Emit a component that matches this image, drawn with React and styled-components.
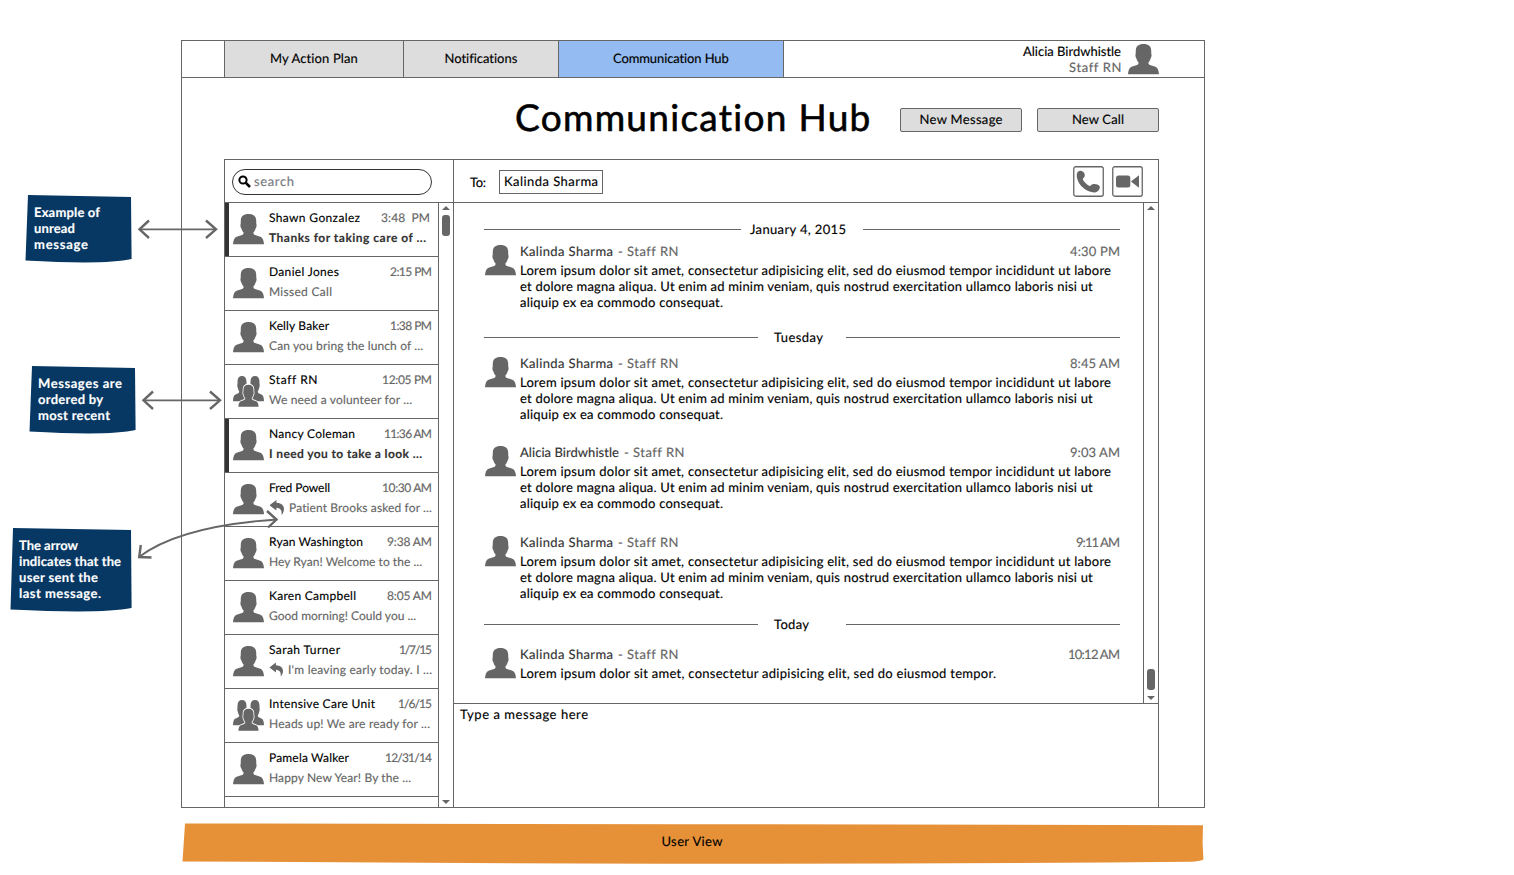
import React, { useLayoutEffect, useRef } from "react";
import styled, { createGlobalStyle, css } from "styled-components";

const LINE = "#666";

const Global = createGlobalStyle`
  *, *::before, *::after { box-sizing: border-box; }
  body {
    margin: 0;
    background: #fff;
    color: #000;
    font: 13px/16px Lato, "Open Sans", sans-serif;
    text-rendering: geometricPrecision;
    -webkit-text-stroke: 0.15px;
  }
`;

const Canvas = styled.div`
  position: relative;
  width: 1514px;
  height: 875px;
  padding: 40px 0 0 181px;
  overflow: hidden;
`;

const TextRun = styled.span`
  display: block;
  flex: none;
  white-space: pre;
  color: ${(p) => p.$color || "inherit"};
`;

/* Tracks a run of text out to a set measure. */
function Text({ w, color, children }) {
  const ref = useRef(null);
  useLayoutEffect(() => {
    const el = ref.current;
    el.style.width = "max-content";
    el.style.letterSpacing = "0px";
    const natural = el.getBoundingClientRect().width;
    el.style.letterSpacing = `${(w - natural) / (children.length - 1)}px`;
    el.style.width = `${w}px`;
  }, [w, children]);
  return <TextRun ref={ref} $color={color}>{children}</TextRun>;
}

const Frame = styled.div`
  display: flex;
  flex-direction: column;
  width: 1024px;
  height: 768px;
  border: 1px solid ${LINE};
`;

const TopBar = styled.nav`
  display: flex;
  height: 37px;
  padding-left: 42px;
  border-bottom: 1px solid ${LINE};
`;

const Tab = styled.div`
  display: flex;
  justify-content: center;
  width: ${(p) => p.$width}px;
  padding-top: 9px;
  border-right: 1px solid ${LINE};
  background: ${(p) => (p.$active ? "#94bbf2" : "#ddd")};
  &:first-child { border-left: 1px solid ${LINE}; }
`;

const User = styled.div`
  display: flex;
  gap: 7px;
  margin-left: auto;
  padding: 2px 45px 0 0;
  svg { margin-top: 1px; }
`;

const UserText = styled.div`
  display: flex;
  flex-direction: column;
  align-items: flex-end;
`;

const TitleRow = styled.header`
  display: flex;
  height: 81px;
  padding: 15px 0 0 333px;
`;

const Title = styled.h1`
  flex: none;
  margin: 0;
  width: 385px;
  font-size: 37px;
  line-height: 48px;
  font-weight: 400;
  -webkit-text-stroke: 0.6px;
`;

const Button = styled.div`
  display: flex;
  flex: none;
  justify-content: center;
  width: 122px;
  height: 24px;
  margin: 15px 15px 0 0;
  padding-top: 2px;
  border: 1px solid ${LINE};
  border-radius: 2px;
  background: #ddd;
`;

const Hub = styled.main`
  display: flex;
  flex: 1;
  min-height: 0;
  width: 935px;
  margin-left: 42px;
  border: 1px solid ${LINE};
  border-bottom: 0;
`;

const Sidebar = styled.aside`
  display: flex;
  flex-direction: column;
  width: 229px;
  border-right: 1px solid ${LINE};
`;

const SearchBar = styled.div`
  flex: none;
  height: 43px;
  padding: 9px 7px;
  border-bottom: 1px solid ${LINE};
`;

const SearchField = styled.div`
  display: flex;
  gap: 3px;
  width: 200px;
  height: 26px;
  padding: 3px 0 0 5px;
  border: 1px solid #333;
  border-radius: 13px;
  svg { margin-top: 1px; }
`;

const Scroller = styled.div`
  display: flex;
  flex: 1;
  min-height: 0;
`;

const Conversations = styled.div`
  width: 214px;
  overflow: hidden;
  border-right: 1px solid ${LINE};
`;

const Row = styled.div`
  display: flex;
  height: 54px;
  padding: 7px 0 0 8px;
  border-bottom: 1px solid ${LINE};
  font-size: 12px;
  ${(p) => p.$unread && css`box-shadow: inset 4px 0 #333;`}
  > svg { flex: none; margin-top: 4px; }
`;

const RowBody = styled.div`
  width: 163px;
  margin-left: 5px;
`;

const RowHead = styled.div`
  display: flex;
  justify-content: space-between;
  height: 20px;
  padding-right: ${(p) => p.$inset || 0}px;
`;

const Preview = styled.div`
  display: flex;
  gap: 5px;
  color: ${LINE};
  ${(p) => p.$unread && css`
    color: #333;
    font-weight: 700;
  `}
`;

const Track = styled.div`
  display: flex;
  flex-direction: column;
  align-items: center;
  width: 14px;
  padding: 3px 0;
`;

const Arrow = styled.i`
  border: solid transparent;
  border-width: 0 4px;
  ${(p) => (p.$down ? css`border-top: 4px solid ${LINE};` : css`border-bottom: 4px solid ${LINE};`)}
`;

const Thumb = styled.i`
  width: 8px;
  height: 21px;
  border-radius: 3px;
  background: ${LINE};
  margin: ${(p) => (p.$end ? "auto 0 6px" : "5px 0 auto")};
`;

const Thread = styled.section`
  display: flex;
  flex-direction: column;
  width: 704px;
`;

const Recipient = styled.div`
  display: flex;
  flex: none;
  height: 43px;
  padding: 6px 15px 0 16px;
  border-bottom: 1px solid ${LINE};
`;

const ToLabel = styled.div`
  width: 29px;
  padding-top: 8px;
`;

const ToField = styled.div`
  width: 104px;
  height: 24px;
  margin: 4px auto 0 0;
  padding: 2px 0 0 4px;
  border: 1px solid ${LINE};
`;

const CallIcons = styled.div`
  display: flex;
  gap: 8px;
`;

const Messages = styled.div`
  display: flex;
  height: 501px;
  border-bottom: 1px solid ${LINE};
`;

const MessageList = styled.div`
  width: 690px;
  padding: 18px 0 0 30px;
  border-right: 1px solid ${LINE};
`;

const Divider = styled.div`
  display: flex;
  width: 636px;
  height: 16px;
  align-items: center;
  &::before, &::after {
    content: "";
    width: ${(p) => p.$rule}px;
    height: 1px;
    background: ${LINE};
  }
  &::before { margin-right: ${(p) => p.$gap}px; }
  &::after { margin-left: auto; }
`;

const Message = styled.article`
  display: flex;
  width: 636px;
  height: ${(p) => p.$height}px;
  padding: ${(p) => p.$top}px 0 0 1px;
  svg { flex: none; margin-top: 2px; }
`;

const MessageBody = styled.div`
  flex: 1;
  margin-left: 4px;
`;

const MessageHead = styled.div`
  display: flex;
  gap: 5px;
  height: 19px;
  color: #333;
`;

const Time = styled.div`
  margin-left: auto;
  color: ${LINE};
`;

const Composer = styled.div`
  padding: 2px 6px;
`;

const Banner = styled.footer`
  display: flex;
  justify-content: center;
  position: relative;
  width: 1022px;
  height: 41px;
  margin-top: 15px;
  padding-top: 10px;
  svg { position: absolute; left: 0; top: 0; }
  span { position: relative; }
`;

const Note = styled.div`
  position: absolute;
  left: ${(p) => p.$x}px;
  top: ${(p) => p.$y}px;
  padding: 9px 0 0 9px;
  color: #fff;
  font-weight: 700;
  svg { position: absolute; left: 0; top: 0; }
  span { position: relative; }
`;

const Connectors = styled.svg`
  position: absolute;
  left: 0;
  top: 180px;
  pointer-events: none;
`;

const PERSON =
  "M15.5 0C10.4 0 7.9 2.4 7.8 6.4L7.7 10C7.1 10.6 7.5 13.4 8.3 14.2C8.8 16.2 9.7 17.4 10.6 18.4C10.7 20 9.8 20.7 8.2 21.2L3.6 22.7C1.2 23.6 .2 26.4 0 30.3H31C30.8 26.4 29.8 23.6 27.4 22.7L22.8 21.2C21.2 20.7 20.3 20 20.4 18.4C21.3 17.4 22.2 16.2 22.7 14.2C23.5 13.4 23.9 10.6 23.3 10L23.2 6.4C23.1 2.4 20.6 0 15.5 0Z";

function Person() {
  return (
    <svg width="31" height="31" viewBox="0 0 31 31" fill={LINE}>
      <path d={PERSON} />
    </svg>
  );
}

function Group() {
  return (
    <svg width="31" height="31" viewBox="0 0 31 31" fill={LINE}>
      <path d={PERSON} transform="scale(.58 .83)" />
      <path d={PERSON} transform="translate(13 0) scale(.58 .83)" />
      <path
        d={PERSON}
        transform="translate(5.4 8.7) scale(.65 .73)"
        stroke="#fff"
        strokeWidth="2.4"
        paintOrder="stroke"
      />
    </svg>
  );
}

function Reply() {
  return (
    <svg width="15" height="16" viewBox="0 0 15 16" fill={LINE}>
      <path d="M0.500 5.3L7.400 0V2.8C12.600 3 15.100 5.8 15 9C14.9 11.6 13.900 13.8 12.400 15C13.200 11.200 12 8 7.400 7.800V10.600Z" />
    </svg>
  );
}

function SearchIcon() {
  return (
    <svg width="13" height="14" viewBox="0 0 13 14" fill="none" stroke="#000" strokeWidth="2">
      <circle cx="5" cy="6" r="3.6" />
      <path d="M7.6 8.6L12 13" strokeWidth="2.6" />
    </svg>
  );
}

function Phone() {
  return (
    <svg width="31" height="31" viewBox="0 0 31 31">
      <rect x=".75" y=".75" width="29.5" height="29.5" rx="2" fill="#fff" stroke={LINE} strokeWidth="1.3" />
      <path
        fill={LINE}
        d="M4 7.5C4.5 5.4 6.300 4.400 8.500 4.900C11 5.500 12.200 7.800 11.700 10.200C11.300 11.600 10 12 9.700 13.200C10.900 15.800 13.700 18.600 16.500 19.900C17.700 20 18.300 18.600 19.700 18.300C22.200 17.700 25 18.300 26.700 20.200C27.400 23 25 26.100 21.800 26.500C18 26.700 12.800 24.500 9 20.800C5.200 17 3.100 11.600 4 7.500Z"
      />
    </svg>
  );
}

function Video() {
  return (
    <svg width="31" height="31" viewBox="0 0 31 31" fill={LINE}>
      <rect x=".75" y=".75" width="29.5" height="29.5" rx="2" fill="#fff" stroke={LINE} strokeWidth="1.3" />
      <rect x="4" y="9.5" width="14.3" height="12" rx="2.5" />
      <path d="M18.9 15.5L27 9.200V21.700Z" />
    </svg>
  );
}

const conversations = [
  { name: "Shawn Gonzalez", w: 91, time: "3:48  PM", tw: 49, inset: 2, text: "Thanks for taking care of ...", pw: 157, unread: true },
  { name: "Daniel Jones", w: 70, time: "2:15 PM", tw: 42, text: "Missed Call", pw: 63 },
  { name: "Kelly Baker", w: 60, time: "1:38 PM", tw: 42, text: "Can you bring the lunch of ...", pw: 154 },
  { name: "Staff RN", w: 48, time: "12:05 PM", tw: 50, text: "We need a volunteer for ...", pw: 143, group: true },
  { name: "Nancy Coleman", w: 86, time: "11:36 AM", tw: 48, text: "I need you to take a look ...", pw: 153, unread: true },
  { name: "Fred Powell", w: 61, time: "10:30 AM", tw: 50, text: "Patient Brooks asked for ...", pw: 143, reply: true },
  { name: "Ryan Washington", w: 94, time: "9:38 AM", tw: 45, text: "Hey Ryan! Welcome to the ...", pw: 153 },
  { name: "Karen Campbell", w: 87, time: "8:05 AM", tw: 45, text: "Good morning! Could you ...", pw: 147 },
  { name: "Sarah Turner", w: 71, time: "1/7/15", tw: 33, text: "I'm leaving early today. I ...", pw: 144, reply: true },
  { name: "Intensive Care Unit", w: 106, time: "1/6/15", tw: 34, text: "Heads up! We are ready for ...", pw: 161, group: true },
  { name: "Pamela Walker", w: 80, time: "12/31/14", tw: 47, text: "Happy New Year! By the ...", pw: 142 },
];

const lorem = [
  ["Lorem ipsum dolor sit amet, consectetur adipisicing elit, sed do eiusmod tempor incididunt ut labore", 591],
  ["et dolore magna aliqua. Ut enim ad minim veniam, quis nostrud exercitation ullamco laboris nisi ut", 573],
  ["aliquip ex ea commodo consequat.", 203],
];
const shortLorem = [["Lorem ipsum dolor sit amet, consectetur adipisicing elit, sed do eiusmod tempor.", 476]];

function Post({ name = "Kalinda Sharma", w = 93, time, tw, height, top = 0, lines = lorem }) {
  return (
    <Message $height={height} $top={top}>
      <Person />
      <MessageBody>
        <MessageHead>
          <Text w={w}>{name}</Text>
          <Text w={60} color={LINE}>- Staff RN</Text>
          <Time><Text w={tw}>{time}</Text></Time>
        </MessageHead>
        {lines.map(([line, width]) => <Text key={line} w={width}>{line}</Text>)}
      </MessageBody>
    </Message>
  );
}

function StickyNote({ x, y, w, h, lines }) {
  return (
    <Note $x={x} $y={y}>
      <svg width={w + 2} height={h + 6}>
        <path
          fill="#073763"
          d={`M3 0L${w} 2L${w + 0.6} ${h - 2}Q${w * 0.75} ${h + 4} 0.500 ${h - 0.6}Z`}
        />
      </svg>
      {lines.map(([line, width]) => <Text key={line} w={width}>{line}</Text>)}
    </Note>
  );
}

export default function App() {
  return (
    <>
      <Global />
      <Canvas>
        <Frame>
          <TopBar>
            <Tab $width={180}><Text w={88}>My Action Plan</Text></Tab>
            <Tab $width={155}><Text w={73}>Notifications</Text></Tab>
            <Tab $width={225} $active><Text w={116}>Communication Hub</Text></Tab>
            <User>
              <UserText>
                <Text w={98}>Alicia Birdwhistle</Text>
                <Text w={52} color={LINE}>Staff RN</Text>
              </UserText>
              <Person />
            </User>
          </TopBar>
          <TitleRow>
            <Title><Text w={356}>Communication Hub</Text></Title>
            <Button><Text w={83}>New Message</Text></Button>
            <Button><Text w={52}>New Call</Text></Button>
          </TitleRow>
          <Hub>
            <Sidebar>
              <SearchBar>
                <SearchField>
                  <SearchIcon />
                  <Text w={40} color="#777a80">search</Text>
                </SearchField>
              </SearchBar>
              <Scroller>
                <Conversations>
                  {conversations.map((c) => (
                    <Row key={c.name} $unread={c.unread}>
                      {c.group ? <Group /> : <Person />}
                      <RowBody>
                        <RowHead $inset={c.inset}>
                          <Text w={c.w}>{c.name}</Text>
                          <Text w={c.tw} color={LINE}>{c.time}</Text>
                        </RowHead>
                        <Preview $unread={c.unread}>
                          {c.reply && <Reply />}
                          <Text w={c.pw}>{c.text}</Text>
                        </Preview>
                      </RowBody>
                    </Row>
                  ))}
                </Conversations>
                <Track>
                  <Arrow />
                  <Thumb />
                  <Arrow $down />
                </Track>
              </Scroller>
            </Sidebar>
            <Thread>
              <Recipient>
                <ToLabel><Text w={16}>To:</Text></ToLabel>
                <ToField><Text w={94}>Kalinda Sharma</Text></ToField>
                <CallIcons>
                  <Phone />
                  <Video />
                </CallIcons>
              </Recipient>
              <Messages>
                <MessageList>
                  <Divider $rule={257} $gap={9}><Text w={96}>January 4, 2015</Text></Divider>
                  <Post time="4:30 PM" tw={50} height={92} top={6} />
                  <Divider $rule={274} $gap={16}><Text w={49}>Tuesday</Text></Divider>
                  <Post time="8:45 AM" tw={50} height={99} top={10} />
                  <Post name="Alicia Birdwhistle" w={99} time="9:03 AM" tw={50} height={90} />
                  <Post time="9:11 AM" tw={44} height={82} />
                  <Divider $rule={274} $gap={16}><Text w={35}>Today</Text></Divider>
                  <Post time="10:12 AM" tw={52} height={60} top={14} lines={shortLorem} />
                </MessageList>
                <Track>
                  <Arrow />
                  <Thumb $end />
                  <Arrow $down />
                </Track>
              </Messages>
              <Composer><Text w={128}>Type a message here</Text></Composer>
            </Thread>
          </Hub>
        </Frame>
        <Banner>
          <svg width="1024" height="42">
            <path fill="#e69138" d="M4 0.500L500 1.200L1022 2.200L1021.600 20L1022.400 36.500Q1018 38.500 1010 38.800Q700 41.500 400 40.500L1.5 38.5Z" />
          </svg>
          <Text w={61}>User View</Text>
        </Banner>
        <StickyNote x={25} y={195} w={106} h={66} lines={[["Example of", 66], ["unread", 41], ["message", 54]]} />
        <StickyNote x={29} y={366} w={106} h={66} lines={[["Messages are", 84], ["ordered by", 65], ["most recent", 72]]} />
        <StickyNote
          x={10}
          y={528}
          w={121}
          h={82}
          lines={[["The arrow", 59], ["indicates that the", 102], ["user sent the", 79], ["last message.", 82]]}
        />
        <Connectors width="300" height="400" viewBox="0 180 300 400" fill="none" stroke={LINE} strokeWidth="1.8">
          <path d="M139 229.3H216M143.500 400.300H220M139 557Q180 526 277 519.500" />
          <path
            strokeWidth="2.4"
            d="M149 220.500L139.500 229.300L149 238M206 220.500L216 229.300L206 238M153 391.500L143.500 400.300L153 409M210 391.500L220 400.300L210 409M140.800 545L139.200 557L151.500 557.500M267 511L276.500 519.500L268 527.500"
          />
        </Connectors>
      </Canvas>
    </>
  );
}
